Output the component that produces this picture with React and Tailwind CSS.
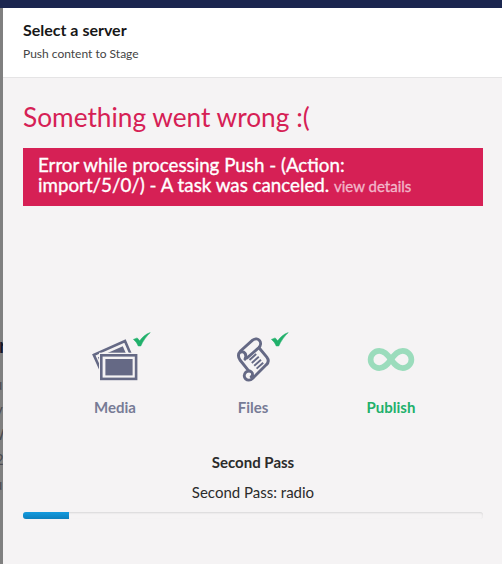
import React from "react";

function Check() {
  return (
    <svg className="absolute -top-[2px] left-[42px] h-4 w-[18px]" viewBox="0 0 18 16">
      <path
        d="M0.4 7.4 L4.2 5.9 L6.7 8.8 C9.2 5.2 12.3 2.3 17.2 0.6 C13.2 4.6 10 9 7.8 14 H5.2 C4.2 11.4 2.8 9.2 0.4 7.4 Z"
        fill="#21b06b"
        stroke="#21b06b"
        strokeWidth="0.5"
      />
    </svg>
  );
}

function MediaIcon() {
  return (
    <svg className="h-12 w-12" viewBox="0 0 48 48" fill="none">
      <path d="M9.2 35 L2.8 20.9 L34 7 L39.6 20" stroke="#656985" strokeWidth="2.6" />
      <path d="M9.6 30 L7 23.2 L31.8 12.2 L35.2 20 H9.6 Z" fill="#656985" />
      <rect x="8" y="18.7" width="40" height="28" fill="#f5f3f4" />
      <rect x="10.3" y="21.3" width="34.8" height="23.6" stroke="#656985" strokeWidth="2.6" />
      <rect x="14.4" y="25" width="27.2" height="16.4" fill="#656985" />
    </svg>
  );
}

function FilesIcon() {
  return (
    <svg
      className="h-12 w-12"
      viewBox="0 0 48 48"
      fill="none"
      stroke="#656985"
      strokeWidth="2.9"
      strokeLinecap="round"
      strokeLinejoin="round"
    >
      <path d="M18 24 L29.6 13.8 C34.6 9.2 29.2 2 23.6 6.2 L11.5 17 C8.6 20 9 23 11 26 L19.5 36.6" />
      <path d="M11.5 18.2 C14.8 16.8 18.5 20 16 25.2" />
      <path d="M30.2 14 L37.8 23.2 C40.2 26.4 39.2 29 37.2 30.8 L23.8 44.2 C18.6 49.4 12.2 42.8 16.8 38.2 C21 35 26 39.4 22.2 42.8" />
      <path
        d="M20.5 26 L27.2 20 M22.8 29 L29.8 22.8 M25.2 31.8 L32 25.7 M27.6 34.6 L34.2 28.7"
        strokeWidth="1.9"
        strokeLinecap="butt"
      />
    </svg>
  );
}

function PublishIcon() {
  return (
    <svg className="h-12 w-12" viewBox="0 0 48 48" fill="none">
      <path
        d="M24 25.5 C19.8 19.6 17 16.9 12.2 16.9 A8.6 8.6 0 0 0 12.2 34.1 C17 34.1 19.8 31.4 24 25.5 C28.2 19.6 31 16.9 35.8 16.9 A8.6 8.6 0 0 1 35.8 34.1 C31 34.1 28.2 31.4 24 25.5 Z"
        stroke="#9bdcbc"
        strokeWidth="5.7"
      />
    </svg>
  );
}

function Step({ icon, label, done, active }) {
  return (
    <div className="flex w-[138px] flex-col items-center">
      <div className="relative h-12 w-12">
        {icon}
        {done && <Check />}
      </div>
      <span
        className={
          active
            ? "mt-[15px] text-[15px] leading-5 font-bold text-[#21b06b]"
            : "mt-[15px] text-[15px] leading-5 font-bold text-[#777b96]"
        }
      >
        {label}
      </span>
    </div>
  );
}

export default function App() {
  return (
    <div className="h-[564px] w-[502px] overflow-hidden bg-[#808080] font-['Lato',sans-serif]">
      <div className="h-2 bg-[#1b264f]" />
      <div className="flex h-[556px]">
        <div className="w-[3px] shrink-0 overflow-hidden pt-[323px] text-[15px] leading-[25px] text-[#4b4b50]">
          <div className="mb-[13px] -ml-px text-xl font-bold text-[#14182c]">r</div>
          <div className="-ml-[6px]">u</div>
          <div className="-ml-[5px]">v</div>
          <div className="-ml-[11px]">W</div>
          <div className="-ml-[5px]">2</div>
          <div className="-ml-[6px]">u</div>
        </div>
        <div className="w-[499px] bg-[#f5f3f4]">
          <header className="h-[70px] border-b border-[#e5e4e5] bg-white px-5 pt-3">
            <h1 className="text-[16px] leading-5 font-bold text-[#171717]">Select a server</h1>
            <p className="mt-1 text-xs leading-5 text-[#444]">Push content to Stage</p>
          </header>
          <main className="w-[480px] pl-5">
            <h2 className="pt-[21px] text-[26.25px] leading-9 text-[#d62055]">Something went wrong :(</h2>
            <div className="mt-[13px] h-[58px] bg-[#d62055] pt-[7px] pl-[15px] text-[18.76px] leading-5 text-white [-webkit-text-stroke:0.35px_currentColor]">
              Error while processing Push - (Action:
              <br />
              import/5/0/) - A task was canceled.{" "}
              <a className="text-[15px] text-[#f2b6c9]">view details</a>
            </div>
            <div className="mt-[128px] flex justify-center">
              <Step icon={<MediaIcon />} label="Media" done />
              <Step icon={<FilesIcon />} label="Files" done />
              <Step icon={<PublishIcon />} label="Publish" active />
            </div>
            <div className="mt-[35px] text-center text-[15px] text-[#2b2b2b]">
              <h3 className="leading-5 font-bold">Second Pass</h3>
              <p className="mt-[10px] leading-5">Second Pass: radio</p>
            </div>
            <div className="mt-[10px] h-[7px] overflow-hidden rounded-[3px] bg-[#f5f3f4] shadow-[inset_0_1px_2px_rgba(0,0,0,0.12)]">
              <div className="h-[7px] w-[46px] bg-linear-to-b from-[#149bdf] to-[#0d80bd]" />
            </div>
          </main>
        </div>
      </div>
    </div>
  );
}
